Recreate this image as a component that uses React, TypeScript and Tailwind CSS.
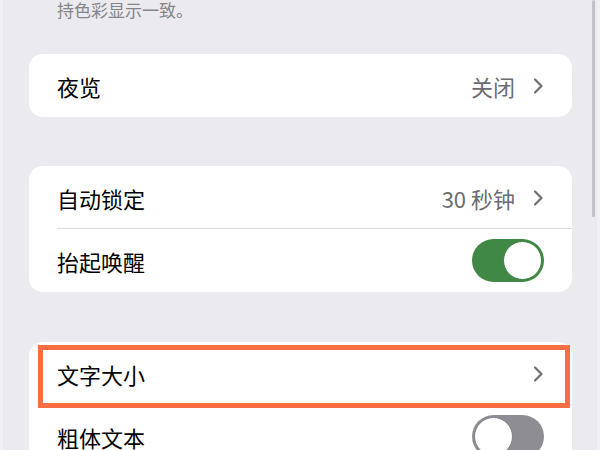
import React from "react";

const font = { fontFamily: '"Noto Sans CJK SC", "Noto Sans", sans-serif' };

function Chevron() {
  return (
    <svg width="12" height="18" viewBox="0 0 12 18" className="shrink-0">
      <path d="M3 2.5 L9.5 9 L3 15.5" fill="none" stroke="#6e6e73" strokeWidth="2.2" strokeLinecap="round" strokeLinejoin="round" />
    </svg>
  );
}

function Toggle({ on }: { on: boolean }) {
  return (
    <div
      className={`w-[72px] h-[43px] rounded-full flex items-center p-[2px] ${
        on ? "bg-[#3f8846] justify-end" : "bg-[#8e8d93] justify-start"
      }`}
    >
      <div className={`w-[39px] h-[39px] rounded-full bg-white border-[1.5px] ${on ? "border-[#3a7f41]" : "border-[#7f7e84]"}`} />
    </div>
  );
}

function Row({ label, value, chevron, toggle, divider }: { label: string; value?: string; chevron?: boolean; toggle?: "on" | "off"; divider?: boolean }) {
  return (
    <div className="relative h-[63px] flex items-center pl-[28px] pr-[28px]">
      <span className="text-[22px] text-black leading-none">{label}</span>
      <div className="ml-auto flex items-center gap-[17px]">
        {value && <span className="text-[22px] text-[#6b6b70] leading-none">{value}</span>}
        {chevron && <Chevron />}
        {toggle && <Toggle on={toggle === "on"} />}
      </div>
      {divider && <div className="absolute left-[28px] right-0 bottom-0 h-px bg-[#dcdce0]" />}
    </div>
  );
}

export default function App() {
  return (
    <div className="w-[600px] h-[450px] overflow-hidden bg-[#ebeaef] flex" style={font}>
      <div className="w-[3px] bg-[#f1f1f4] shrink-0" />
      <div className="w-[543px] ml-[26px] shrink-0">
        <div className="h-[54px]">
          <p className="text-[17px] leading-[20px] text-[#85858a] pl-[28px]">持色彩显示一致。</p>
        </div>
        <div className="bg-white rounded-[14px] overflow-hidden">
          <Row label="夜览" value="关闭" chevron />
        </div>
        <div className="h-[49px]" />
        <div className="bg-white rounded-[14px] overflow-hidden">
          <Row label="自动锁定" value="30 秒钟" chevron divider />
          <Row label="抬起唤醒" toggle="on" />
        </div>
        <div className="h-[50px]" />
        <div className="relative bg-white rounded-t-[14px]">
          <Row label="文字大小" chevron divider />
          <Row label="粗体文本" toggle="off" />
          <div className="absolute left-[9px] top-[3px] w-[532px] h-[63px] border-[5px] border-[#f76e42]" />
        </div>
      </div>
      <div className="w-[20px] shrink-0" />
      <div className="w-[3px] shrink-0">
        <div className="h-[217px] w-[3px] rounded-full bg-[#c3c2c8]" />
      </div>
      <div className="w-[2px] shrink-0" />
      <div className="flex-1 bg-[#f1f1f4]" />
    </div>
  );
}
